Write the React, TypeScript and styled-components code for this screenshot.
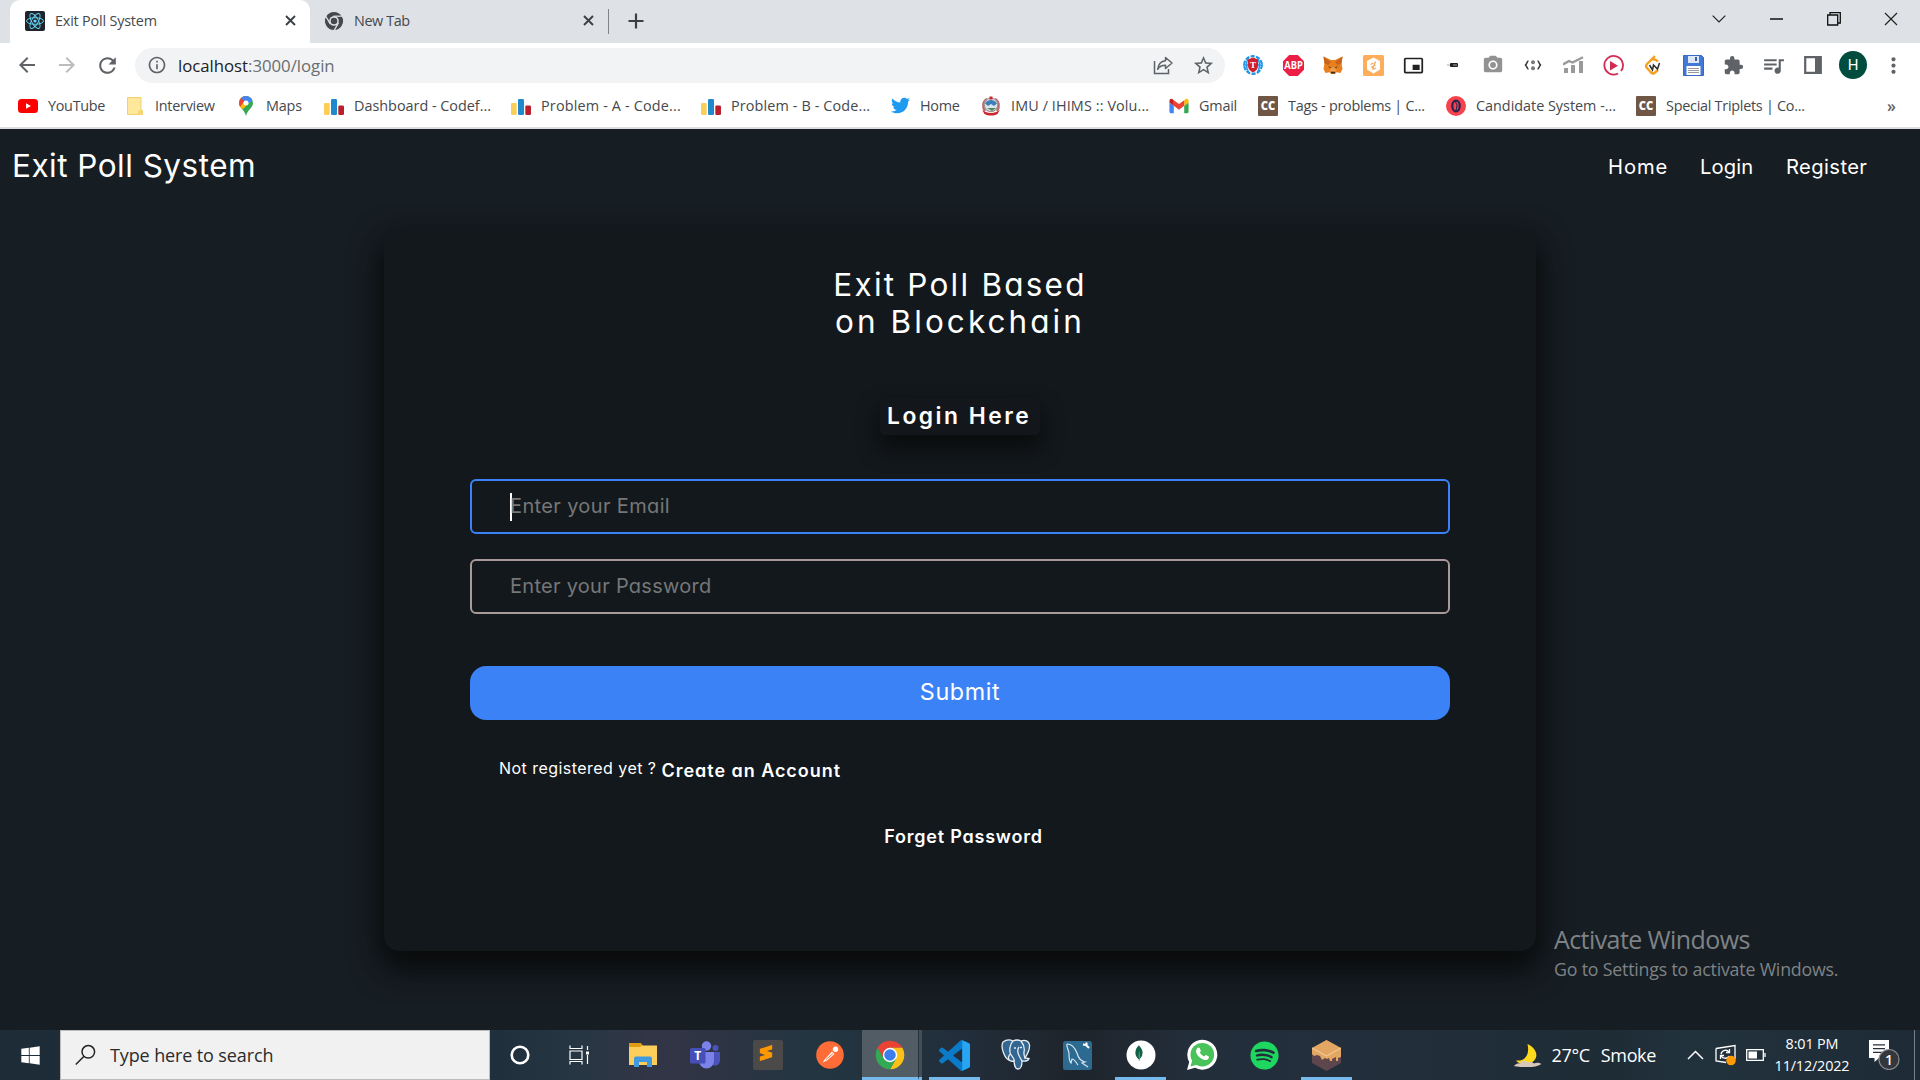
import React from "react";
import styled, { createGlobalStyle } from "styled-components";
import { MdArrowBack, MdArrowForward, MdRefresh, MdInfoOutline, MdStarBorder, MdExtension, MdQueueMusic, MdMoreVert, MdPictureInPictureAlt, MdCameraAlt } from "react-icons/md";
import { FaTwitter, FaSpotify, FaWindows } from "react-icons/fa";
import { SiMongodb, SiSublimetext } from "react-icons/si";

const GlobalStyle = createGlobalStyle`
  * { box-sizing: border-box; }
  html, body { margin: 0; padding: 0; overflow: hidden; background: #161d23; }
  svg { display: block; flex: none; }
  button, input { font: inherit; }
`;

const ui = `"Open Sans", "Noto Sans", sans-serif`;
const brand = `Inter, "Open Sans", sans-serif`;

const Screen = styled.div`
  position: relative;
  width: 1920px;
  height: 1080px;
  display: flex;
  flex-direction: column;
  overflow: hidden;
  font-family: ${ui};
`;

/* ---------- browser tabs ---------- */
const TabStrip = styled.div`
  height: 43px;
  background: #dee1e6;
  display: flex;
  padding-left: 10px;
`;
const Tab = styled.div<{ $active?: boolean; $width: number }>`
  width: ${p => p.$width}px;
  height: 43px;
  padding: 0 14px 2px ${p => (p.$active ? 15 : 14)}px;
  display: flex;
  align-items: center;
  border-radius: 10px 10px 0 0;
  background: ${p => (p.$active ? "#fff" : "transparent")};
`;
const TabTitle = styled.span<{ $ls: number }>`
  flex: 1;
  margin-left: 10px;
  font-size: 14.4px;
  line-height: 20px;
  letter-spacing: ${p => p.$ls}px;
  color: #45494d;
  white-space: pre;
`;
const StripDivider = styled.div`
  width: 1px;
  height: 25px;
  margin: 9px 19px 0 0;
  background: #808387;
`;
const NewTab = styled.div`
  display: flex;
  align-items: center;
  height: 42px;
`;
const WindowControls = styled.div`
  margin-left: auto;
  display: flex;
  height: 38px;
`;
const Control = styled.div`
  width: 57.3px;
  display: flex;
  align-items: center;
  justify-content: center;
`;

/* ---------- toolbar ---------- */
const Toolbar = styled.div`
  height: 44px;
  background: #fff;
  display: flex;
  align-items: center;
  padding: 0 7px 0 7px;
`;
const NavButton = styled.div<{ $faded?: boolean }>`
  width: 40px;
  display: flex;
  justify-content: center;
  color: ${p => (p.$faded ? "#babcbe" : "#5f6368")};
`;
const Omnibox = styled.div`
  width: 1090px;
  height: 35px;
  margin-left: 8px;
  padding: 0 10px 0 12px;
  border-radius: 18px;
  background: #f1f3f4;
  display: flex;
  align-items: center;
  color: #5f6368;
`;
const Url = styled.span`
  flex: 1;
  margin-left: 11px;
  font-size: 16.8px;
  line-height: 24px;
  letter-spacing: -0.03px;
  padding-top: 1px;
  color: #6a6e72;
  white-space: pre;
`;
const Host = styled.span`
  color: #202124;
`;
const OmniActions = styled.div`
  display: flex;
  gap: 18px;
  align-items: center;
`;
const Extensions = styled.div`
  display: flex;
  margin-left: 8px;
`;
const Extension = styled.div`
  width: 40px;
  height: 30px;
  display: flex;
  align-items: center;
  justify-content: center;
  color: #5f6368;
`;
const Avatar = styled.div`
  width: 28px;
  height: 28px;
  border-radius: 50%;
  background: #004d40;
  color: #fff;
  font: 15px/28px Roboto, sans-serif;
  text-align: center;
`;

/* ---------- bookmarks ---------- */
const Bookmarks = styled.div`
  height: 42px;
  background: #fff;
  border-bottom: 2px solid #dcdee1;
  display: flex;
  align-items: center;
  padding: 0 24px 3px 18px;
`;
const Bookmark = styled.div<{ $width: number }>`
  width: ${p => p.$width}px;
  display: flex;
  align-items: center;
  gap: 10px;
`;
const BookmarkLabel = styled.span<{ $ls: number }>`
  font-size: 14.4px;
  line-height: 20px;
  letter-spacing: ${p => p.$ls}px;
  color: #45494d;
  white-space: pre;
`;
const More = styled.span`
  margin-left: auto;
  font: 600 16px/20px ${ui};
  color: #5f6368;
`;

/* ---------- page ---------- */
const Page = styled.main`
  flex: 1;
  background: #161d23;
  font-family: ${brand};
  font-feature-settings: "cv11";
  color: #fff;
  display: flex;
  flex-direction: column;
  align-items: center;
`;
const Header = styled.header`
  width: 100%;
  height: 98px;
  padding: 17px 53px 0 12px;
  display: flex;
  justify-content: space-between;
`;
const Brand = styled.h1`
  margin: 0;
  font-size: 31.5px;
  font-weight: 400;
  line-height: 40px;
  letter-spacing: 0.48px;
`;
const Nav = styled.nav`
  display: flex;
  padding-top: 9px;
`;
const NavLink = styled.a<{ $width: number; $ls: number }>`
  width: ${p => p.$width}px;
  font-size: 20.2px;
  line-height: 24px;
  letter-spacing: ${p => p.$ls}px;
  white-space: nowrap;
`;
const Card = styled.section`
  width: 1152px;
  height: 724px;
  padding: 39px 86px 0;
  border-radius: 15px;
  background: #13181c;
  box-shadow: 0 15px 30px 4px rgba(8, 9, 9, 0.96);
  display: flex;
  flex-direction: column;
`;
const Title = styled.h2`
  margin: 0;
  font-size: 31.5px;
  font-weight: 400;
  line-height: 37px;
  text-align: center;
`;
const TitleLine = styled.div<{ $ls: number }>`
  letter-spacing: ${p => p.$ls}px;
`;
const LoginBadge = styled.div`
  align-self: center;
  width: 160px;
  height: 37px;
  margin-top: 58px;
  padding-left: 7px;
  border-radius: 5px;
  background: #13171c;
  box-shadow: 0 12px 22px 0 rgba(8, 8, 8, 0.8);
  font-size: 22.8px;
  font-weight: 600;
  line-height: 36px;
  letter-spacing: 2.5px;
  white-space: nowrap;
`;
const Field = styled.div<{ $focus?: boolean; $top: number }>`
  height: 55px;
  margin-top: ${p => p.$top}px;
  padding: 0 38px;
  border: 2px solid ${p => (p.$focus ? "#3b82f6" : "#a99a9a")};
  border-radius: 6px;
  display: flex;
  align-items: center;
`;
const Placeholder = styled.span<{ $ls: number; $caret?: boolean }>`
  height: 28px;
  border-left: 2px solid ${p => (p.$caret ? "#fff" : "transparent")};
  font-size: 20px;
  line-height: 27px;
  letter-spacing: ${p => p.$ls}px;
  text-indent: -2px;
  color: #757778;
`;
const Submit = styled.button`
  height: 54px;
  margin: 52px 0 0;
  padding: 0 0 3px;
  border: 0;
  border-radius: 16px;
  background: #3b82f6;
  color: #fff;
  font-size: 23.3px;
  letter-spacing: 0.6px;
`;
const SignUp = styled.div`
  display: flex;
  gap: 5px;
  margin-top: 35px;
  padding-left: 29px;
  height: 28px;
  line-height: 24px;
  white-space: pre;
`;
const Hint = styled.span`
  padding-top: 1px;
  font-size: 16px;
  letter-spacing: 0.46px;
`;
const BoldLink = styled.a<{ $top: number; $ls: number; $center?: boolean }>`
  margin-top: ${p => p.$top}px;
  padding-left: ${p => (p.$center ? 7 : 0)}px;
  font-size: 18px;
  font-weight: 600;
  line-height: 24px;
  letter-spacing: ${p => p.$ls}px;
  text-align: center;
`;
const Watermark = styled.div`
  position: absolute;
  left: 1554px;
  top: 922px;
  color: #7f8386;
  white-space: nowrap;
`;
const WatermarkTitle = styled.div`
  font-size: 25px;
  line-height: 34px;
  letter-spacing: -0.58px;
`;
const WatermarkText = styled.div`
  font-size: 17.8px;
  line-height: 27px;
  letter-spacing: -0.2px;
`;

/* ---------- taskbar ---------- */
const Taskbar = styled.footer`
  height: 50px;
  background: linear-gradient(90deg, #1e2c37 0, #1f303c 26%, #263642 30%, #323546 34%, #2e3443 37%, #223540 43%, #222e3b 50%, #1e242b 56%, #232e3b 62%, #222f3b 73%, #1e2c36 84%, #22323d 88%, #1e2b36 100%);
  display: flex;
  color: #fff;
`;
const Start = styled.div`
  width: 60px;
  display: flex;
  align-items: center;
  justify-content: center;
`;
const Search = styled.div`
  width: 430px;
  border: 1px solid #bcbcbc;
  background: #f1f1f1;
  display: flex;
  align-items: center;
  gap: 14px;
  padding-left: 14px;
  color: #2b2b2b;
  font-size: 18px;
  letter-spacing: -0.12px;
`;
const TaskButton = styled.div<{ $gap: number; $open?: boolean; $active?: boolean }>`
  width: ${p => (p.$active ? 56 : 51)}px;
  margin-right: ${p => p.$gap}px;
  display: flex;
  align-items: center;
  justify-content: center;
  padding-top: 3px;
  border-bottom: 3px solid ${p => (p.$open ? "#76b9ed" : "transparent")};
  background: ${p => (p.$active ? "#515c65" : "transparent")};
`;
const TaskButtons = styled.div`
  display: flex;
  margin-left: 4px;
`;
const StackEdge = styled.div`
  width: 4px;
  margin-right: 7px;
  border-left: 1px solid #29343c;
  border-bottom: 3px solid #76b9ed;
  background: #414d57;
`;
const Tray = styled.div`
  margin-left: auto;
  display: flex;
  align-items: center;
`;
const Weather = styled.span<{ $width: number }>`
  width: ${p => p.$width}px;
  font-size: 18px;
  line-height: 24px;
  letter-spacing: -0.35px;
  white-space: nowrap;
`;
const TrayIcon = styled.div<{ $left: number }>`
  margin-left: ${p => p.$left}px;
`;
const Clock = styled.div`
  width: 86px;
  margin-left: 3px;
  font-size: 14.4px;
  line-height: 22px;
  letter-spacing: -0.15px;
  text-align: center;
`;
const Peek = styled.div`
  width: 6px;
  height: 50px;
  margin-left: 14px;
  border-left: 1px solid #76818a;
`;

/* ---------- drawings ---------- */
const ReactMark = () => (
  <svg width="20" height="20" viewBox="0 0 20 20">
    <rect width="20" height="20" rx="2" fill="#20232a" />
    <g fill="none" stroke="#61dafb" strokeWidth="0.9">
      <ellipse cx="10" cy="10" rx="8.5" ry="3.3" />
      <ellipse cx="10" cy="10" rx="8.5" ry="3.3" transform="rotate(60 10 10)" />
      <ellipse cx="10" cy="10" rx="8.5" ry="3.3" transform="rotate(120 10 10)" />
    </g>
    <circle cx="10" cy="10" r="1.6" fill="#61dafb" />
  </svg>
);
const sector = "M24 24 14.47 29.5 4.95 13A22 22 0 0 1 43.05 13H24Z";
const Chrome = ({ size, mono }: { size: number; mono?: boolean }) => (
  <svg width={size} height={size} viewBox="1 1 46 46">
    <g stroke={mono ? "#dee1e6" : "none"} strokeWidth={mono ? 2.5 : 0}>
      <path d={sector} fill={mono ? "#45494d" : "#ea4335"} />
      <path d={sector} fill={mono ? "#45494d" : "#fbc116"} transform="rotate(120 24 24)" />
      <path d={sector} fill={mono ? "#45494d" : "#34a853"} transform="rotate(240 24 24)" />
    </g>
    <circle cx="24" cy="24" r="11" fill={mono ? "#dee1e6" : "#fff"} />
    <circle cx="24" cy="24" r={mono ? 7.5 : 8.8} fill={mono ? "#45494d" : "#3b7ded"} />
  </svg>
);
const Cross = ({ size, weight, color }: { size: number; weight: number; color: string }) => (
  <svg width={size} height={size} viewBox={`0 0 ${size} ${size}`} stroke={color} strokeWidth={weight}>
    <path d={`M1 1L${size - 1} ${size - 1}M${size - 1} 1L1 ${size - 1}`} />
  </svg>
);
const YouTube = () => (
  <svg width="20" height="20" viewBox="0 0 20 20">
    <rect x="0" y="3" width="20" height="14" rx="3.5" fill="#f00" />
    <path d="M8 7.2v5.6l5-2.8z" fill="#fff" />
  </svg>
);
const Folder = () => (
  <svg width="20" height="20" viewBox="0 0 20 20">
    <path d="M2.5 1.5h13.5v12l1.5 1v4h-15z" fill="#ffe79b" stroke="#f0d070" />
    <path d="M13 18.5v-3.5l3-1.5 1.5 1.5v3.5z" fill="#f7d774" />
  </svg>
);
const MapPin = () => (
  <svg width="20" height="20" viewBox="0 0 20 20">
    <defs><clipPath id="pin"><path d="M10 0a7 7 0 0 0-7 7c0 5 5.5 6.5 7 13 1.5-6.5 7-8 7-13a7 7 0 0 0-7-7z" /></clipPath></defs>
    <g clipPath="url(#pin)">
      <rect width="20" height="20" fill="#34a853" />
      <path d="M0 0h20L7 13 3 12z" fill="#fbbc04" />
      <path d="M0 0h12l-8 11-4-2z" fill="#ea4335" />
      <path d="M5 2 10-1h8l-2 6-5 3z" fill="#4285f4" />
    </g>
    <circle cx="10" cy="7" r="2.5" fill="#fff" />
  </svg>
);
const Bars = () => (
  <svg width="20" height="20" viewBox="0 0 20 20">
    <rect x="0" y="7" width="5.7" height="12" rx="1.2" fill="#f9cf58" />
    <rect x="7" y="3" width="6" height="16" rx="1.2" fill="#2089cb" />
    <rect x="14.3" y="9.5" width="5.7" height="9.5" rx="1.2" fill="#b9202c" />
  </svg>
);
const Emblem = () => (
  <svg width="20" height="20" viewBox="0 0 20 20">
    <path d="M4 15C1 11 2 5 6 3M16 15c3-4 2-10-2-12" fill="none" stroke="#b9686b" strokeWidth="2.4" />
    <circle cx="10" cy="8.8" r="6.8" fill="#dde6ea" stroke="#a58f8f" strokeWidth="1.2" />
    <path d="M4 7.5c2-4.5 9-5 12 0l-3 2.500-3-2-3 2z" fill="#3d7fb8" />
    <path d="M6 12h9l-4 3z" fill="#4c8b63" />
    <path d="M1 13.5c4 4.500 14 4.500 18 0l-2.500 4.500c-4 2-9 2-13 0z" fill="#c9282d" />
    <path d="M8.500.5h3v3h-3z" fill="#c9282d" />
  </svg>
);
const Gmail = () => (
  <svg width="20" height="20" viewBox="50 39 92 72">
    <path fill="#4285f4" d="M58 108h14V74L52 59v43c0 3.32 2.69 6 6 6" />
    <path fill="#34a853" d="M120 108h14c3.32 0 6-2.69 6-6V59l-20 15" />
    <path fill="#fbbc04" d="M120 48v26l20-15v-8c0-7.42-8.47-11.65-14.4-7.2" />
    <path fill="#ea4335" d="M72 74V48l24 18 24-18v26L96 92" />
    <path fill="#c5221f" d="M52 51v8l20 15V48l-5.6-4.2c-5.94-4.45-14.4-.22-14.4 7.2" />
  </svg>
);
const CodeChef = () => (
  <svg width="20" height="20" viewBox="0 0 20 20">
    <rect width="20" height="20" rx="1" fill="#6f5645" />
    <text x="10" y="14" textAnchor="middle" textLength="14.5" lengthAdjust="spacingAndGlyphs" fontFamily="Open Sans" fontWeight="800" fontSize="11.5" fill="#fff">CC</text>
  </svg>
);
const Candidate = () => (
  <svg width="20" height="20" viewBox="0 0 20 20">
    <circle cx="10" cy="10" r="10" fill="#f5424c" />
    <ellipse cx="10" cy="10" rx="3.7" ry="5.3" fill="none" stroke="#2b2350" strokeWidth="2.2" />
    <path d="M8.500 4l2.500 5-1 6" fill="none" stroke="#2b2350" strokeWidth="1" />
  </svg>
);
const Share = () => (
  <svg width="21" height="20" viewBox="0 0 21 20" fill="none" stroke="#5f6368" strokeWidth="1.5">
    <path d="M1.5 6v12.5h14V14" />
    <path d="M12.5 2.5l6.5 5.5-6.500 5.500v-3.200c-4 0-6.300 1.400-7.800 4 .5-5 3-8.200 7.800-8.600z" strokeLinejoin="round" />
  </svg>
);
const Globe = () => (
  <svg width="20" height="20" viewBox="0 0 20 20">
    <circle cx="10" cy="10" r="8.8" fill="none" stroke="#2196e8" strokeWidth="2.2" strokeDasharray="4.2 1.33" />
    <path d="M5.500 3c-2.600 4-2.600 10 0 14M14.500 3c2.600 4 2.600 10 0 14M0 10h20" fill="none" stroke="#2196e8" strokeWidth="1.5" />
    <path d="M10 2.500l5 2V11c0 3-2 5-5 6.500C7 16 5 14 5 11V4.500z" fill="#d11f2d" />
    <text x="10" y="13" textAnchor="middle" fontFamily="Liberation Serif" fontWeight="700" fontSize="9" fill="#fff">T</text>
  </svg>
);
const AdBlock = () => (
  <svg width="21" height="21" viewBox="0 0 21 21">
    <path d="M6.2 0h8.6L21 6.2v8.6L14.8 21H6.200L0 14.800V6.200z" fill="#ed1e45" />
    <text x="10.5" y="14.3" textAnchor="middle" textLength="18.500" lengthAdjust="spacingAndGlyphs" fontFamily="Open Sans" fontWeight="700" fontSize="10.5" fill="#fff">ABP</text>
  </svg>
);
const Fox = () => (
  <svg width="20" height="19" viewBox="0 0 20 19">
    <path d="M.5.5 8 4h4L19.5.5l-1 7 1 5.5-2 4-4-.8-1.5 1.8H8L6.500 16.200l-4 .8-2-4 1-5.500z" fill="#e8801f" />
    <path d="M.5.5 8 6 5.500 9 1.500 7.500zM19.500.5 12 6l2.500 3 4-1.500z" fill="#c8641b" />
    <path d="M5 10l3 1.500-1 .8zM15 10l-3 1.500 1 .8z" fill="#2b3440" />
    <path d="M8 15.500h4v2H8z" fill="#39332f" />
    <path d="M6.500 14.500 9 11.500h2l2.500 3-1.500 1H8z" fill="#f0a050" />
  </svg>
);
const Honey = () => (
  <svg width="21" height="21" viewBox="0 0 21 21">
    <rect width="21" height="21" rx="1.5" fill="#ffad5a" />
    <path d="M10.500 2.500l6.500 3.500v8.500l-6.500 4-6.500-4V6z" fill="#fff" />
    <path d="M7.500 9.500l3-1.500M8 12.500l4.500-2.500M10 14.500l3-1.500M12.500 6.500l-3 8" stroke="#f7a860" strokeWidth="1.3" />
  </svg>
);
const Lens = () => (
  <svg width="12" height="6" viewBox="0 0 12 6">
    <rect x="3" y="1" width="8" height="4" rx="1" fill="#222" />
    <path d="M0 3h3M6 3h4" stroke="#aaa" />
  </svg>
);
const Brackets = () => (
  <svg width="18" height="14" viewBox="0 0 18 14">
    <path d="M4.500 3C2.500 3 3.500 6.500 1 7c2.500.5 1.500 4 3.500 4M13.500 3c2 0 1 3.500 3.500 4-2.500.5-1.500 4-3.500 4" fill="none" stroke="#3c3c3c" strokeWidth="1.6" />
    <circle cx="9" cy="4.200" r="2" fill="#777" /><circle cx="9" cy="10.200" r="2" fill="#777" />
  </svg>
);
const Growth = () => (
  <svg width="21" height="18" viewBox="0 0 21 18" fill="#9a9a9a">
    <path d="M1 12h4v5H1zM8 9h4v8H8zM16 5h4v12h-4z" />
    <path d="M0 8.500 6 5l3.500 1.500L20 1.200" fill="none" stroke="#9a9a9a" strokeWidth="2.400" />
  </svg>
);
const PlayRing = () => (
  <svg width="21" height="21" viewBox="0 0 21 21">
    <path d="M15 18.500A9.300 9.300 0 1 1 18 16" fill="none" stroke="#d32a52" strokeWidth="1.800" />
    <path d="M7 6v9.500l8-4.700z" fill="#d32a52" />
  </svg>
);
const LeetNotes = () => (
  <svg width="18" height="20" viewBox="0 0 18 20">
    <path d="M11 1 3 9a3 3 0 0 0 0 4l4 4.500a3 3 0 0 0 4 0l3-2.500M8 4.500c2-.5 4 0 6 2" fill="none" stroke="#f5a021" strokeWidth="2.400" />
    <path d="M5.500 10l3 5 1-5 4 4 2-6" fill="none" stroke="#2c2c2c" strokeWidth="1.500" />
  </svg>
);
const Floppy = () => (
  <svg width="21" height="21" viewBox="0 0 21 21">
    <path d="M.5.5h18l2 2v18H.5z" fill="#4279d6" stroke="#346ac6" />
    <path d="M5 1h11v7H5z" fill="#dce8f8" /><path d="M12 2h2v4h-2z" fill="#335fae" />
    <path d="M3.500 11h14v9h-14z" fill="#fff" />
    <path d="M5 13.500h11M5 15.500h11M5 17.500h11" stroke="#999" />
  </svg>
);
const SidePanel = () => (
  <svg width="18" height="18" viewBox="0 0 18 18">
    <path d="M1.200 1.200h15.600v15.600H1.200z" fill="#fff" stroke="#5f6368" strokeWidth="2.200" />
    <path d="M11 1h6v16h-6z" fill="#5f6368" />
  </svg>
);
const Magnifier = () => (
  <svg width="21" height="22" viewBox="0 0 21 22" fill="none" stroke="#222" strokeWidth="1.500">
    <circle cx="13.300" cy="7.800" r="6.300" /><path d="M8.800 12.400.8 20.600" />
  </svg>
);
const Cortana = () => (
  <svg width="20" height="20" viewBox="0 0 20 20"><circle cx="10" cy="10" r="8.300" fill="none" stroke="#fff" strokeWidth="2.600" /></svg>
);
const TaskView = () => (
  <svg width="21" height="20" viewBox="0 0 21 20" fill="none" stroke="#fff" strokeWidth="1.200">
    <path d="M1 .5v3h12v-3M1 6h12v8.500H1zM1 19.500v-3h12v3M18.500 1v4M18.500 10v9" /><path d="M17 6.500h3v3h-3z" fill="#fff" stroke="none" />
  </svg>
);
const Explorer = () => (
  <svg width="28" height="24" viewBox="0 0 28 24">
    <path d="M0 0h12l2 3h14v3H0z" fill="#e09d14" /><path d="M0 4h11l2-1.500h15V22H0z" fill="#fccf5a" />
    <path d="M5 24V15.500q0-2 2-2h14q2 0 2 2V24h-5v-5h-8v5z" fill="#3f9ae0" />
  </svg>
);
const Teams = () => (
  <svg width="30" height="28" viewBox="0 0 30 28">
    <circle cx="25.500" cy="7" r="3" fill="#4b53bc" /><path d="M18 11h12v8c0 7-8 7-9 3z" fill="#4b53bc" />
    <circle cx="16.500" cy="5" r="4.700" fill="#7b83eb" /><path d="M10 11h14v9a7.500 7.500 0 0 1-15 0z" fill="#7b83eb" />
    <rect x="0" y="7" width="15.500" height="15.500" rx="1.500" fill="#464eb8" />
    <text x="7.700" y="19" textAnchor="middle" fontFamily="Open Sans" fontWeight="700" fontSize="12" fill="#fff">T</text>
  </svg>
);
const Sublime = () => (
  <svg width="30" height="30" viewBox="0 0 30 30">
    <rect width="30" height="30" rx="2" fill="#4b4a49" />
    <SiSublimetext x="5" y="5" width="20" height="20" color="#ff9800" />
  </svg>
);
const Postman = () => (
  <svg width="28" height="28" viewBox="0 0 28 28">
    <circle cx="14" cy="14" r="13.800" fill="#ff6c37" />
    <path d="M6.500 21.500l2.500-3.500 7-7.500 2.500 2.500-7.500 6.500z" fill="#fff" /><circle cx="19.500" cy="8.300" r="2.700" fill="#fff" />
    <path d="M10 18.500l7-6" stroke="#ff6c37" />
  </svg>
);
const VsCode = () => (
  <svg width="31" height="31" viewBox="0 0 24 24">
    <path fill="#0b7bc9" d="M23.15 2.587L18.21.21a1.494 1.494 0 0 0-1.705.29l-9.46 8.63-4.12-3.128a.999.999 0 0 0-1.276.057L.327 7.261A1 1 0 0 0 .326 8.74L3.899 12 .326 15.26a1 1 0 0 0 .001 1.479L1.65 17.94a.999.999 0 0 0 1.276.057l4.12-3.128 9.46 8.63a1.492 1.492 0 0 0 1.704.29l4.942-2.377A1.5 1.5 0 0 0 24 20.06V3.939a1.5 1.5 0 0 0-.85-1.352zm-5.146 14.861L10.826 12l7.178-5.448v10.896z" />
    <path fill="#27a5f2" d="M18.004.15 23.150 2.587A1.500 1.500 0 0 1 24 3.939V20.060a1.500 1.500 0 0 1-.85 1.352L18.004 23.850z" />
  </svg>
);
const Postgres = () => (
  <svg width="32" height="32" viewBox="0 0 32 32">
    <path d="M3 3c4-3 8-2 10-1 3-1.500 6-1 8 0 4-1.500 8 0 8.500 4 .4 4-2.500 10-4.500 13l4 .5c-1 3-4 3-7 2.500 0 5-1 8-4 8s-3.500-3-4-8c-2 .5-4 0-5-1C5 20 0 8 3 3z" fill="#336791" stroke="#e8eef3" strokeWidth="1.300" />
    <path d="M13 2c-3 3-4 9-2.500 13 1 2 3 3 4 7M21 2c3 4 4 7 3 11-.5 2 .5 4 1 6M10.500 15c-2 1-2.500 4-1.500 6M19 8c-3 4 0 9 3 14M14 9h2M20 8.500h2" fill="none" stroke="#e8eef3" strokeWidth="1.300" />
  </svg>
);
const MySql = () => (
  <svg width="29" height="29" viewBox="0 0 29 29">
    <rect width="29" height="29" rx="2.500" fill="#2c6a91" />
    <path d="M4 3c5 0 8 4 10 9 1 4 3 8 8 9l-3 1 6 4M4 3c-1 3 2 6 2 10 0 3 0 7 2 9l1-4c3 0 4 4 6 6" fill="none" stroke="#d5e4ed" strokeWidth="1.200" />
    <path d="M20 3.500l3 .5 3 3M23.500 1.500v2.500" fill="none" stroke="#fff" strokeWidth="2" />
  </svg>
);
const Mongo = () => (
  <svg width="30" height="30" viewBox="0 0 30 30">
    <circle cx="15" cy="15" r="14.500" fill="#fff" /><SiMongodb x="5" y="5" width="20" height="20" color="#116149" />
  </svg>
);
const WhatsApp = () => (
  <svg width="32" height="32" viewBox="0 0 32 32">
    <path d="M1 31l2.200-8A15 15 0 1 1 9 28.800z" fill="#fff" />
    <circle cx="16.300" cy="15.700" r="11.800" fill="#4ac25a" /><path d="M4.500 27.500l2-7 5 5z" fill="#4ac25a" />
    <path d="M11.500 9c1-1 2-.5 2.300.3l1 2.400c.2.600-.9 1.500-.9 1.900 0 .6 3 3.800 4.300 3.800.5 0 1.200-1.500 1.800-1.300l2.800 1.400c.5.300 0 3-2.300 3.500-3 .6-9-3-10.300-7.500-.4-1.500.1-3.500 1.300-4.500z" fill="#fff" />
  </svg>
);
const Ganache = () => (
  <svg width="29" height="31" viewBox="0 0 29 31">
    <path d="M14.500 0L29 8v15l-14.500 8L0 23V8z" fill="#5e464d" />
    <path d="M14.500 0L29 8v9l-3 1v3h-2v-4l-4 2v2h-2l-1-3-2 1-2-1-3 2-2-4-3-1-3 1-2-2V8z" fill="#e4a663" />
    <path d="M0 8l14.500 8L29 8" fill="none" stroke="#f2c692" strokeWidth="1.200" />
  </svg>
);
const Moon = () => (
  <svg width="29" height="25" viewBox="0 0 29 25">
    <path d="M14.500 1c9 4 12 13 5 18-5 3.500-13 3-16.500-1.500 9 1 14-6 11.500-16.500z" fill="#ffd91c" />
    <path d="M1 23c2-2 4-3 6-2.500 1-3 6-4 8-1 3-1 5 0 6 1 3-1.500 6-.5 7.500.5-4 2.500-8 3-14 3S3 24 1 23z" fill="#d8c7bb" />
  </svg>
);
const Sync = () => (
  <svg width="22" height="22" viewBox="0 0 22 22" fill="none" stroke="#fff" strokeWidth="1.300">
    <path d="M1 4.500L20 1.500V15M1 4.500v12.500l10 1.500" />
    <path d="M6 10c1-4 6-5 8-2M14.500 5v3.500H11M14 12c-1 3-6 3-8 0M5.500 15v-3.500H9" />
    <circle cx="16" cy="16.500" r="4.800" fill="#ff9a06" stroke="none" />
  </svg>
);
const Battery = () => (
  <svg width="20" height="12" viewBox="0 0 20 12" fill="none" stroke="#fff" strokeWidth="1.300">
    <path d="M.7.7h16.600v10.600H.7zM19 4v4" /><path d="M2.500 2.500h8.500v7H2.500z" fill="#fff" stroke="none" />
  </svg>
);
const Notifications = () => (
  <svg width="31" height="30" viewBox="0 0 31 30">
    <path d="M0 0h20v18H10l-4.500 4v-4H0z" fill="#fff" />
    <path d="M4 4.800h12M4 8.600h12M4 12.400h9" stroke="#25313a" strokeWidth="1.300" />
    <circle cx="20" cy="19.500" r="10" fill="#34383c" stroke="#888c90" strokeWidth="1.200" />
    <text x="20" y="24.500" textAnchor="middle" fontFamily="Open Sans" fontWeight="600" fontSize="14" fill="#fff">1</text>
  </svg>
);

const bookmarks: { icon: React.ReactNode; label: string; width: number; ls: number }[] = [
  { icon: <YouTube />, label: "YouTube", width: 107, ls: -0.3 },
  { icon: <Folder />, label: "Interview", width: 111, ls: -0.25 },
  { icon: <MapPin />, label: "Maps", width: 88, ls: -0.2 },
  { icon: <Bars />, label: "Dashboard - Codef...", width: 187, ls: -0.01 },
  { icon: <Bars />, label: "Problem - A - Code...", width: 190, ls: 0.17 },
  { icon: <Bars />, label: "Problem - B - Code...", width: 190, ls: 0.13 },
  { icon: <FaTwitter size={19} color="#1d9bf0" />, label: "Home", width: 90, ls: -0.3 },
  { icon: <Emblem />, label: "IMU / IHIMS :: Volu...", width: 188, ls: 0.11 },
  { icon: <Gmail />, label: "Gmail", width: 89, ls: -0.2 },
  { icon: <CodeChef />, label: "Tags - problems | C...", width: 188, ls: -0.26 },
  { icon: <Candidate />, label: "Candidate System -...", width: 190, ls: -0.01 },
  { icon: <CodeChef />, label: "Special Triplets | Co...", width: 180, ls: -0.26 },
];

const extensions: React.ReactNode[] = [
  <Globe />, <AdBlock />, <Fox />, <Honey />,
  <MdPictureInPictureAlt size={21} color="#222" />, <Lens />,
  <MdCameraAlt size={22} color="#929292" />, <Brackets />, <Growth />, <PlayRing />, <LeetNotes />, <Floppy />,
  <MdExtension size={21} />, <MdQueueMusic size={25} />, <SidePanel />,
  <Avatar>H</Avatar>, <MdMoreVert size={25} />,
];

export default function App() {
  return (
    <Screen>
      <GlobalStyle />
      <TabStrip>
        <Tab $active $width={300}>
          <ReactMark />
          <TabTitle $ls={-0.19}>Exit Poll System</TabTitle>
          <Cross size={11} weight={1.9} color="#3c4043" />
        </Tab>
        <Tab $width={298}>
          <Chrome size={20} mono />
          <TabTitle $ls={-0.4}>New Tab</TabTitle>
          <Cross size={11} weight={1.9} color="#3c4043" />
        </Tab>
        <StripDivider />
        <NewTab>
          <svg width="16" height="16" viewBox="0 0 16 16" stroke="#3c4043" strokeWidth="2.2"><path d="M8 .5v15M.5 8h15" /></svg>
        </NewTab>
        <WindowControls>
          <Control><svg width="14" height="8" viewBox="0 0 14 8" fill="none" stroke="#222" strokeWidth="1.2"><path d="M.7.7L7 7 13.300.7" /></svg></Control>
          <Control><svg width="13" height="2" viewBox="0 0 13 2"><path d="M0 1h13" stroke="#111" strokeWidth="1.5" /></svg></Control>
          <Control><svg width="14" height="14" viewBox="0 0 14 14" fill="none" stroke="#111" strokeWidth="1.3"><path d="M.7 3h10v10H.7zM3 3V.7h10.300V11h-2.300" /></svg></Control>
          <Control><Cross size={14} weight={1.2} color="#222" /></Control>
        </WindowControls>
      </TabStrip>
      <Toolbar>
        <NavButton><MdArrowBack size={24} /></NavButton>
        <NavButton $faded><MdArrowForward size={24} /></NavButton>
        <NavButton><MdRefresh size={25} /></NavButton>
        <Omnibox>
          <MdInfoOutline size={20} />
          <Url><Host>localhost</Host>:3000/login</Url>
          <OmniActions><Share /><MdStarBorder size={23} /></OmniActions>
        </Omnibox>
        <Extensions>{extensions.map((icon, i) => <Extension key={i}>{icon}</Extension>)}</Extensions>
      </Toolbar>
      <Bookmarks>
        {bookmarks.map(b => (
          <Bookmark key={b.label} $width={b.width}>{b.icon}<BookmarkLabel $ls={b.ls}>{b.label}</BookmarkLabel></Bookmark>
        ))}
        <More>»</More>
      </Bookmarks>

      <Page>
        <Header>
          <Brand>Exit Poll System</Brand>
          <Nav>
            <NavLink $width={92} $ls={0.9}>Home</NavLink>
            <NavLink $width={86} $ls={0.1}>Login</NavLink>
            <NavLink $width={81} $ls={0.4}>Register</NavLink>
          </Nav>
        </Header>
        <Card>
          <Title>
            <TitleLine $ls={2.22}>Exit Poll Based</TitleLine>
            <TitleLine $ls={3.05}>on Blockchain</TitleLine>
          </Title>
          <LoginBadge>Login Here</LoginBadge>
          <Field $focus $top={44}><Placeholder $caret $ls={0.36}>Enter your Email</Placeholder></Field>
          <Field $top={25}><Placeholder $ls={0.28}>Enter your Password</Placeholder></Field>
          <Submit>Submit</Submit>
          <SignUp>
            <Hint>Not registered yet ?</Hint>
            <BoldLink $top={4} $ls={0.96}>Create an Account</BoldLink>
          </SignUp>
          <BoldLink $top={42} $ls={0.78} $center>Forget Password</BoldLink>
        </Card>
      </Page>

      <Watermark>
        <WatermarkTitle>Activate Windows</WatermarkTitle>
        <WatermarkText>Go to Settings to activate Windows.</WatermarkText>
      </Watermark>

      <Taskbar>
        <Start><FaWindows size={21} /></Start>
        <Search><Magnifier />Type here to search</Search>
        <TaskButtons>
          <TaskButton $gap={9}><Cortana /></TaskButton>
          <TaskButton $gap={12}><TaskView /></TaskButton>
          <TaskButton $gap={11}><Explorer /></TaskButton>
          <TaskButton $gap={12}><Teams /></TaskButton>
          <TaskButton $gap={11}><Sublime /></TaskButton>
          <TaskButton $gap={7}><Postman /></TaskButton>
          <TaskButton $gap={0} $open $active><Chrome size={30} /></TaskButton>
          <StackEdge />
          <TaskButton $gap={10} $open><VsCode /></TaskButton>
          <TaskButton $gap={11}><Postgres /></TaskButton>
          <TaskButton $gap={12}><MySql /></TaskButton>
          <TaskButton $gap={10} $open><Mongo /></TaskButton>
          <TaskButton $gap={12}><WhatsApp /></TaskButton>
          <TaskButton $gap={11}><FaSpotify size={29} color="#1ed760" /></TaskButton>
          <TaskButton $gap={0} $open><Ganache /></TaskButton>
        </TaskButtons>
        <Tray>
          <Moon />
          <TrayIcon $left={10}><Weather $width={48}>27°C</Weather></TrayIcon>
          <TrayIcon $left={11}><Weather $width={55}>Smoke</Weather></TrayIcon>
          <TrayIcon $left={31}><svg width="17" height="10" viewBox="0 0 17 10" fill="none" stroke="#fff" strokeWidth="1.5"><path d="M1 9l7.500-7.500L16 9" /></svg></TrayIcon>
          <TrayIcon $left={11}><Sync /></TrayIcon>
          <TrayIcon $left={9}><Battery /></TrayIcon>
          <Clock>8:01 PM<br />11/12/2022</Clock>
          <TrayIcon $left={14}><Notifications /></TrayIcon>
          <Peek />
        </Tray>
      </Taskbar>
    </Screen>
  );
}
